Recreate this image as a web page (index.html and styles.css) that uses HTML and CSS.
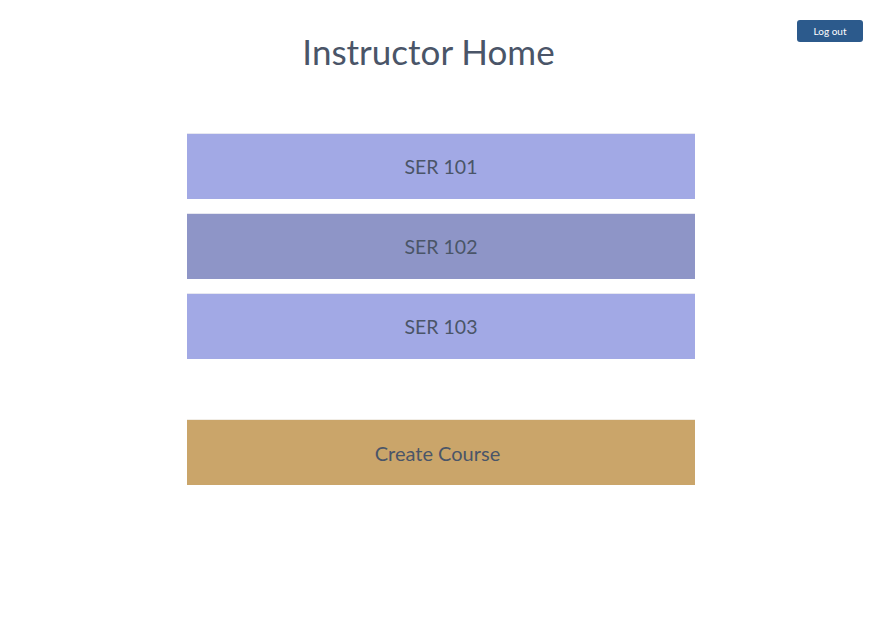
FILE: index.html
```html
<!DOCTYPE html>
<html>
<head>
<meta charset="utf-8">
<link rel="stylesheet" href="styles.css">
</head>
<body>
<div class="page">
  <button class="logout">Log out</button>
  <h1 class="title">Instructor Home</h1>
  <div class="courses">
    <div class="course">SER 101</div>
    <div class="course course-active">SER 102</div>
    <div class="course">SER 103</div>
  </div>
  <div class="create"><span class="create-label">Create Course</span></div>
</div>
</body>
</html>
```
FILE: styles.css
```css
html, body {
  margin: 0;
  padding: 0;
  background: #ffffff;
}
body {
  font-family: Lato, "Open Sans", sans-serif;
  color: #4a5568;
}
.page {
  position: relative;
  width: 880px;
  height: 624px;
  display: flex;
  flex-direction: column;
  align-items: center;
}
.logout {
  position: absolute;
  top: 20px;
  right: 17px;
  width: 66px;
  height: 22px;
  background: #2c5a8c;
  color: #ffffff;
  border: none;
  border-radius: 3px;
  font-family: Lato, sans-serif;
  font-size: 10px;
  padding: 0;
}
.title {
  margin: 30px 23px 0 0;
  font-weight: 400;
  font-size: 35px;
  line-height: 43px;
  color: #4a5568;
}
.courses {
  margin-top: 61px;
  margin-left: 2px;
  display: flex;
  flex-direction: column;
  gap: 15px;
}
.course, .create {
  width: 508px;
  height: 65px;
  display: flex;
  align-items: center;
  justify-content: center;
  font-size: 19.5px;
  background: #a2a9e5;
  box-shadow: 0 -1px 0 #e6e7f0;
}
.course-active {
  background: #8e95c7;
}
.create {
  margin-top: 61px;
  margin-left: 2px;
  background: #caa56a;
  box-shadow: 0 -1px 0 #f1ede6;
  font-size: 20px;
}
.create-label {
  margin-right: 7px;
}
```
